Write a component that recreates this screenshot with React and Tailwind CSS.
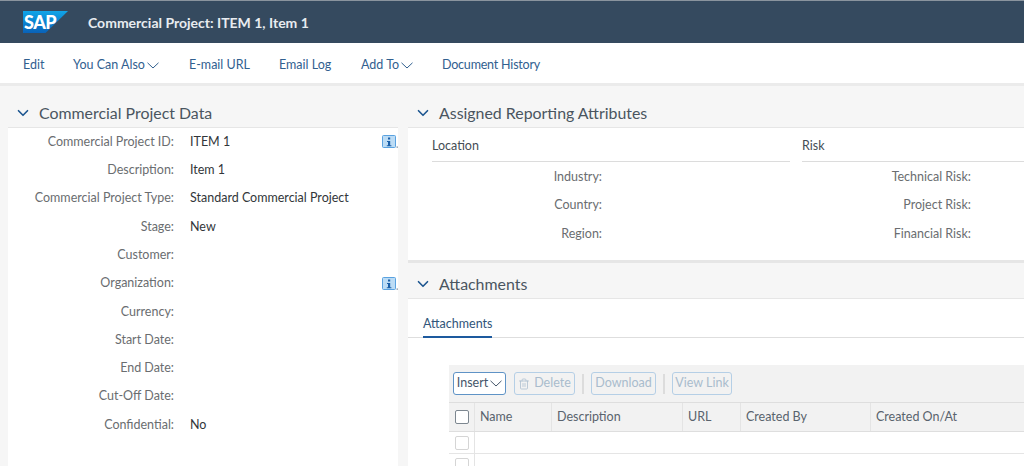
import { ChevronDown, Trash2 } from 'lucide-react'

const font = "[font-family:'Lato','Noto_Sans',sans-serif]"

const projectFields = [
  ['Commercial Project ID:', 'ITEM 1', true],
  ['Description:', 'Item 1'],
  ['Commercial Project Type:', 'Standard Commercial Project'],
  ['Stage:', 'New'],
  ['Customer:', ''],
  ['Organization:', '', true],
  ['Currency:', ''],
  ['Start Date:', ''],
  ['End Date:', ''],
  ['Cut-Off Date:', ''],
  ['Confidential:', 'No'],
]

const columns = [
  ['Name', 'w-[77px]'],
  ['Description', 'w-[131px]'],
  ['URL', 'w-[58px]'],
  ['Created By', 'w-[130px]'],
  ['Created On/At', 'flex-1'],
]

function Caret() {
  return (
    <svg width="12" height="7" viewBox="0 0 12 7" className="ml-[2px] shrink-0">
      <path d="M0.5 0.8 6 6 11.5 0.8" fill="none" stroke="currentColor" strokeWidth="1" />
    </svg>
  )
}

function InfoIcon() {
  return (
    <svg width="16" height="14" viewBox="0 0 16 14">
      <rect x="0.5" y="0.5" width="13" height="12" rx="1" fill="#bcdcf5" stroke="#5aa2e0" />
      <rect x="6" y="2.5" width="2.2" height="2" fill="#1b5fa8" />
      <path d="M5 6h3.2v4.2h1.2v1H4.8v-1H6V7H5z" fill="#1b5fa8" />
      <rect x="14.6" y="11.5" width="1.2" height="1.2" fill="#5b7185" />
    </svg>
  )
}

function SectionHeader({ title }) {
  return (
    <div className="flex items-center h-[28px] pl-[6px] gap-[7px]">
      <ChevronDown size={18} strokeWidth={2.2} className="text-[#1d5690]" />
      <span className="text-[15.9px] text-[#4a5560]">{title}</span>
    </div>
  )
}

function AttrColumn({ title, labels, className, labelWidth }) {
  return (
    <div className={className}>
      <div className="h-[34px] pt-[4px] flex items-center border-b border-[#dcdcdc] text-[12.5px] text-[#444d55]">{title}</div>
      <div className="pt-[1px]">
        {labels.map(l => (
          <div key={l} className={`h-[28.4px] flex items-center justify-end text-[12.5px] text-[#6a6d70] ${labelWidth}`}>{l}</div>
        ))}
      </div>
    </div>
  )
}

function ToolButton({ children, className = '' }) {
  return (
    <div className={`h-[23px] flex items-center justify-center gap-1 rounded-[3px] border border-[#b5cfe6] text-[12.5px] text-[#a9bccd] ${className}`}>
      {children}
    </div>
  )
}

export default function App() {
  return (
    <div className={`h-[466px] w-[1024px] overflow-hidden bg-[#f6f6f6] ${font}`}>
      <div className="h-[43px] bg-[#354a5f] border-t border-[#8a949e] flex items-center pl-[23px]">
        <div className="w-[45px] h-[22px] bg-gradient-to-b from-[#12a5e8] to-[#0a62b8] [clip-path:polygon(0_0,100%_0,50%_100%,0_100%)] pl-[1px]">
          <span className="block text-[18px] leading-[22px] font-black text-white tracking-[-0.5px]">SAP</span>
        </div>
        <span className="ml-[20px] text-[14px] font-bold text-[#e8ecf0]">Commercial Project: ITEM 1, Item 1</span>
      </div>

      <div className="h-[43px] bg-white border-b-[3px] border-[#ebebeb] flex items-center pl-[23px] pt-[5px] text-[12.5px] text-[#31608f]">
        <span className="w-[50px]">Edit</span>
        <span className="w-[116px] flex items-center">You Can Also<Caret /></span>
        <span className="w-[90px]">E-mail URL</span>
        <span className="w-[82px]">Email Log</span>
        <span className="w-[81px] flex items-center">Add To<Caret /></span>
        <span className="tracking-[-0.2px]">Document History</span>
      </div>

      <div className="flex pt-[13px] pl-[8px] gap-[10px]">
        <div className="w-[390px] shrink-0">
          <SectionHeader title="Commercial Project Data" />
          <div className="bg-white h-[340px] border-t border-[#e6e6e6]">
            {projectFields.map(([label, value, info]) => (
              <div key={label} className="h-[28.3px] flex items-center text-[12.5px]">
                <span className="w-[166px] text-right text-[#6a6d70]">{label}</span>
                <span className="ml-[16px] flex-1 text-[#32363a]">{value}</span>
                {info && <InfoIcon />}
              </div>
            ))}
          </div>
        </div>

        <div className="flex-1 min-w-0">
          <SectionHeader title="Assigned Reporting Attributes" />
          <div className="bg-white h-[133px] border-t border-[#e6e6e6] pl-[24px] flex gap-[12px]">
            <AttrColumn title="Location" labels={['Industry:', 'Country:', 'Region:']} className="w-[358px]" labelWidth="w-[170px]" />
            <AttrColumn title="Risk" labels={['Technical Risk:', 'Project Risk:', 'Financial Risk:']} className="flex-1" labelWidth="w-[169px]" />
          </div>
          <div className="h-[3px] bg-[#e6e6e6]" />
          <div className="pt-[7px]">
            <SectionHeader title="Attachments" />
          </div>
          <div className="bg-white h-[170px] border-t border-[#e6e6e6]">
            <div className="h-[39px] pl-[15px] border-b border-[#dedede] flex items-end">
              <span className="h-[27px] pt-[2px] text-[12.5px] text-[#31557a] border-b-2 border-[#1d5a9e] -mb-[1px] flex items-center">Attachments</span>
            </div>
            <div className="ml-[41px] mt-[27px]">
              <div className="h-[37px] bg-[#f2f2f2] flex items-center pl-[4px]">
                <div className="h-[23px] w-[53px] flex items-center justify-center rounded-[3px] border border-[#5f93c6] bg-white text-[12.5px] text-[#45566a]">
                  Insert<Caret />
                </div>
                <ToolButton className="ml-[8px] w-[61px]"><Trash2 size={12} strokeWidth={1.5} />Delete</ToolButton>
                <div className="w-[2px] h-[20px] bg-[#dcdcdc] mx-[7px]" />
                <ToolButton className="w-[65px]">Download</ToolButton>
                <div className="w-[2px] h-[20px] bg-[#dcdcdc] mx-[7px]" />
                <ToolButton className="w-[60px]">View Link</ToolButton>
              </div>
              <div className="h-[30px] flex bg-[#f2f2f2] border-y border-[#dedede]">
                <div className="w-[26px] shrink-0 pl-[1px] flex items-center justify-center border-r border-[#e4e4e4]">
                  <div className="w-[14px] h-[14px] rounded-[2px] border border-[#7d8790] bg-white" />
                </div>
                {columns.map(([name, w]) => (
                  <div key={name} className={`${w} shrink-0 pl-[5px] flex items-center text-[12.5px] text-[#59636d] border-r border-[#e4e4e4] last:border-r-0`}>{name}</div>
                ))}
              </div>
              {[0, 1].map(i => (
                <div key={i} className="h-[22px] flex border-b border-[#e5e5e5] bg-white">
                  <div className="w-[26px] shrink-0 pl-[1px] flex items-center justify-center border-r border-[#e4e4e4]">
                    <div className="w-[14px] h-[14px] rounded-[2px] border border-[#d5d5d5] bg-white" />
                  </div>
                </div>
              ))}
            </div>
          </div>
        </div>
      </div>
    </div>
  )
}
